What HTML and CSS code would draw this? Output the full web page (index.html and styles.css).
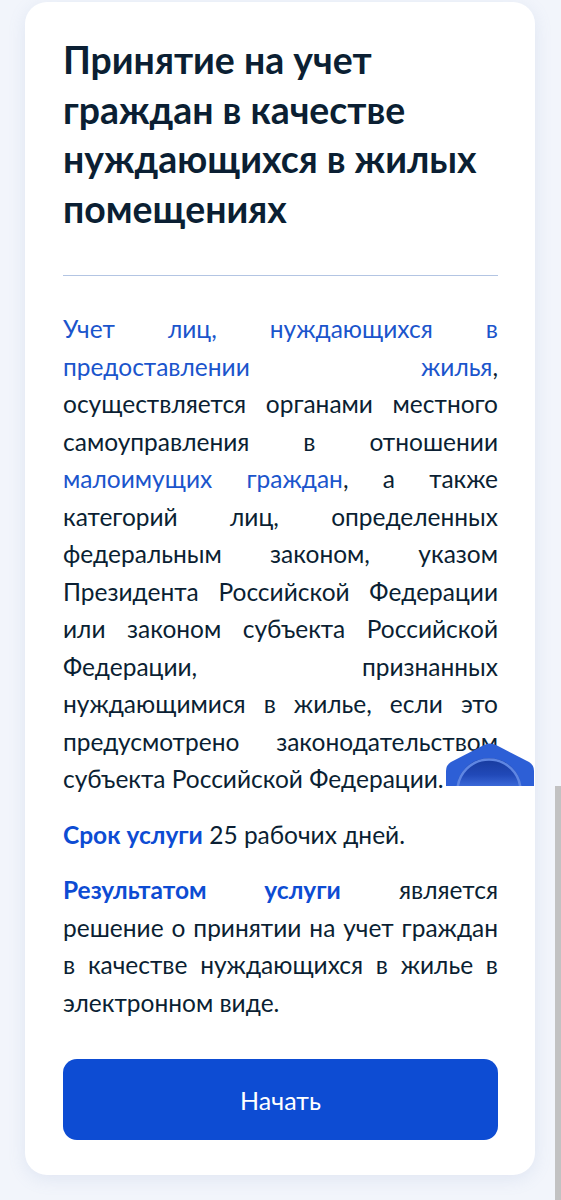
FILE: index.html
```html
<!DOCTYPE html>
<html lang="ru">
<head>
<meta charset="utf-8">
<title>Принятие на учет</title>
<link rel="stylesheet" href="styles.css">
</head>
<body>
<main class="card">
  <h1 class="title">Принятие на учет граждан в качестве нуждающихся в жилых помещениях</h1>
  <hr class="divider">
  <p class="text"><a class="link" href="#">Учет лиц, нуждающихся в предоставлении жилья</a>, осуществляется органами местного самоуправления в отношении <a class="link" href="#">малоимущих граждан</a>, а также категорий лиц, определенных федеральным законом, указом Президента Российской Федерации или законом субъекта Российской Федерации, признанных нуждающимися в жилье, если это предусмотрено законодательством субъекта Российской Федерации.</p>
  <p class="text"><b class="accent">Срок услуги</b> 25 рабочих дней.</p>
  <p class="text"><b class="accent">Результатом услуги</b> является решение о принятии на учет граждан в качестве нуждающихся в жилье в электронном виде.</p>
  <button class="start" type="button">Начать</button>
</main>
<div class="robot" aria-hidden="true">
  <svg width="88" height="43" viewBox="0 0 88 43">
    <defs>
      <linearGradient id="dome" x1="0" y1="15" x2="0" y2="43" gradientUnits="userSpaceOnUse">
        <stop offset="0" stop-color="#173a9c"/>
        <stop offset="0.6" stop-color="#2149b8"/>
        <stop offset="1" stop-color="#3a68d8"/>
      </linearGradient>
    </defs>
    <path d="M0 43 L0 28 Q0 22 5 19 L38 2 Q44 -1 50 2 L83 19 Q88 22 88 28 L88 43 Z" fill="#2d5fd6"/>
    <circle cx="43" cy="48" r="33" fill="url(#dome)"/>
    <circle cx="43" cy="48" r="31.5" fill="none" stroke="#5f86e2" stroke-width="2.5"/>
  </svg>
</div>
<div class="scrollbar" aria-hidden="true"></div>
</body>
</html>
```

FILE: styles.css
```css
html, body {
  margin: 0;
  padding: 0;
}
body {
  background: #f2f5fb;
  font-family: Lato, "Noto Sans", sans-serif;
  color: #0b1f33;
  min-height: 1200px;
}
.card {
  box-sizing: border-box;
  width: 510px;
  margin: 2px 0 0 25px;
  padding: 33px 37px 35px 38px;
  background: #ffffff;
  border-radius: 22px;
  box-shadow: 0 4px 18px rgba(110, 140, 190, 0.14);
}
.title {
  margin: 0;
  font-size: 37.4px;
  font-weight: 700;
  line-height: 49.5px;
  color: #0b1f33;
}
.divider {
  margin: 42px 0 0;
  border: 0;
  height: 1px;
  background: #b3c5e3;
}
.text {
  margin: 18px 0 0;
  font-size: 24.5px;
  line-height: 37.5px;
  text-align: justify;
  color: #0b1f33;
}
.divider + .text {
  margin-top: 34px;
}
.link {
  color: #1b55cc;
  text-decoration: none;
}
.accent {
  color: #0d4cd3;
  font-weight: 700;
}
.start {
  display: block;
  width: 100%;
  height: 81px;
  margin-top: 38px;
  border: 0;
  border-radius: 14px;
  background: #0d4cd3;
  color: #ffffff;
  font-family: Lato, "Noto Sans", sans-serif;
  font-size: 25px;
  font-weight: 400;
}
.robot {
  position: absolute;
  left: 446px;
  top: 743px;
  width: 88px;
  height: 43px;
}
.robot svg {
  display: block;
}
.scrollbar {
  position: absolute;
  right: 0;
  top: 786px;
  width: 6px;
  height: 414px;
  background: #c2c2c2;
}
```
